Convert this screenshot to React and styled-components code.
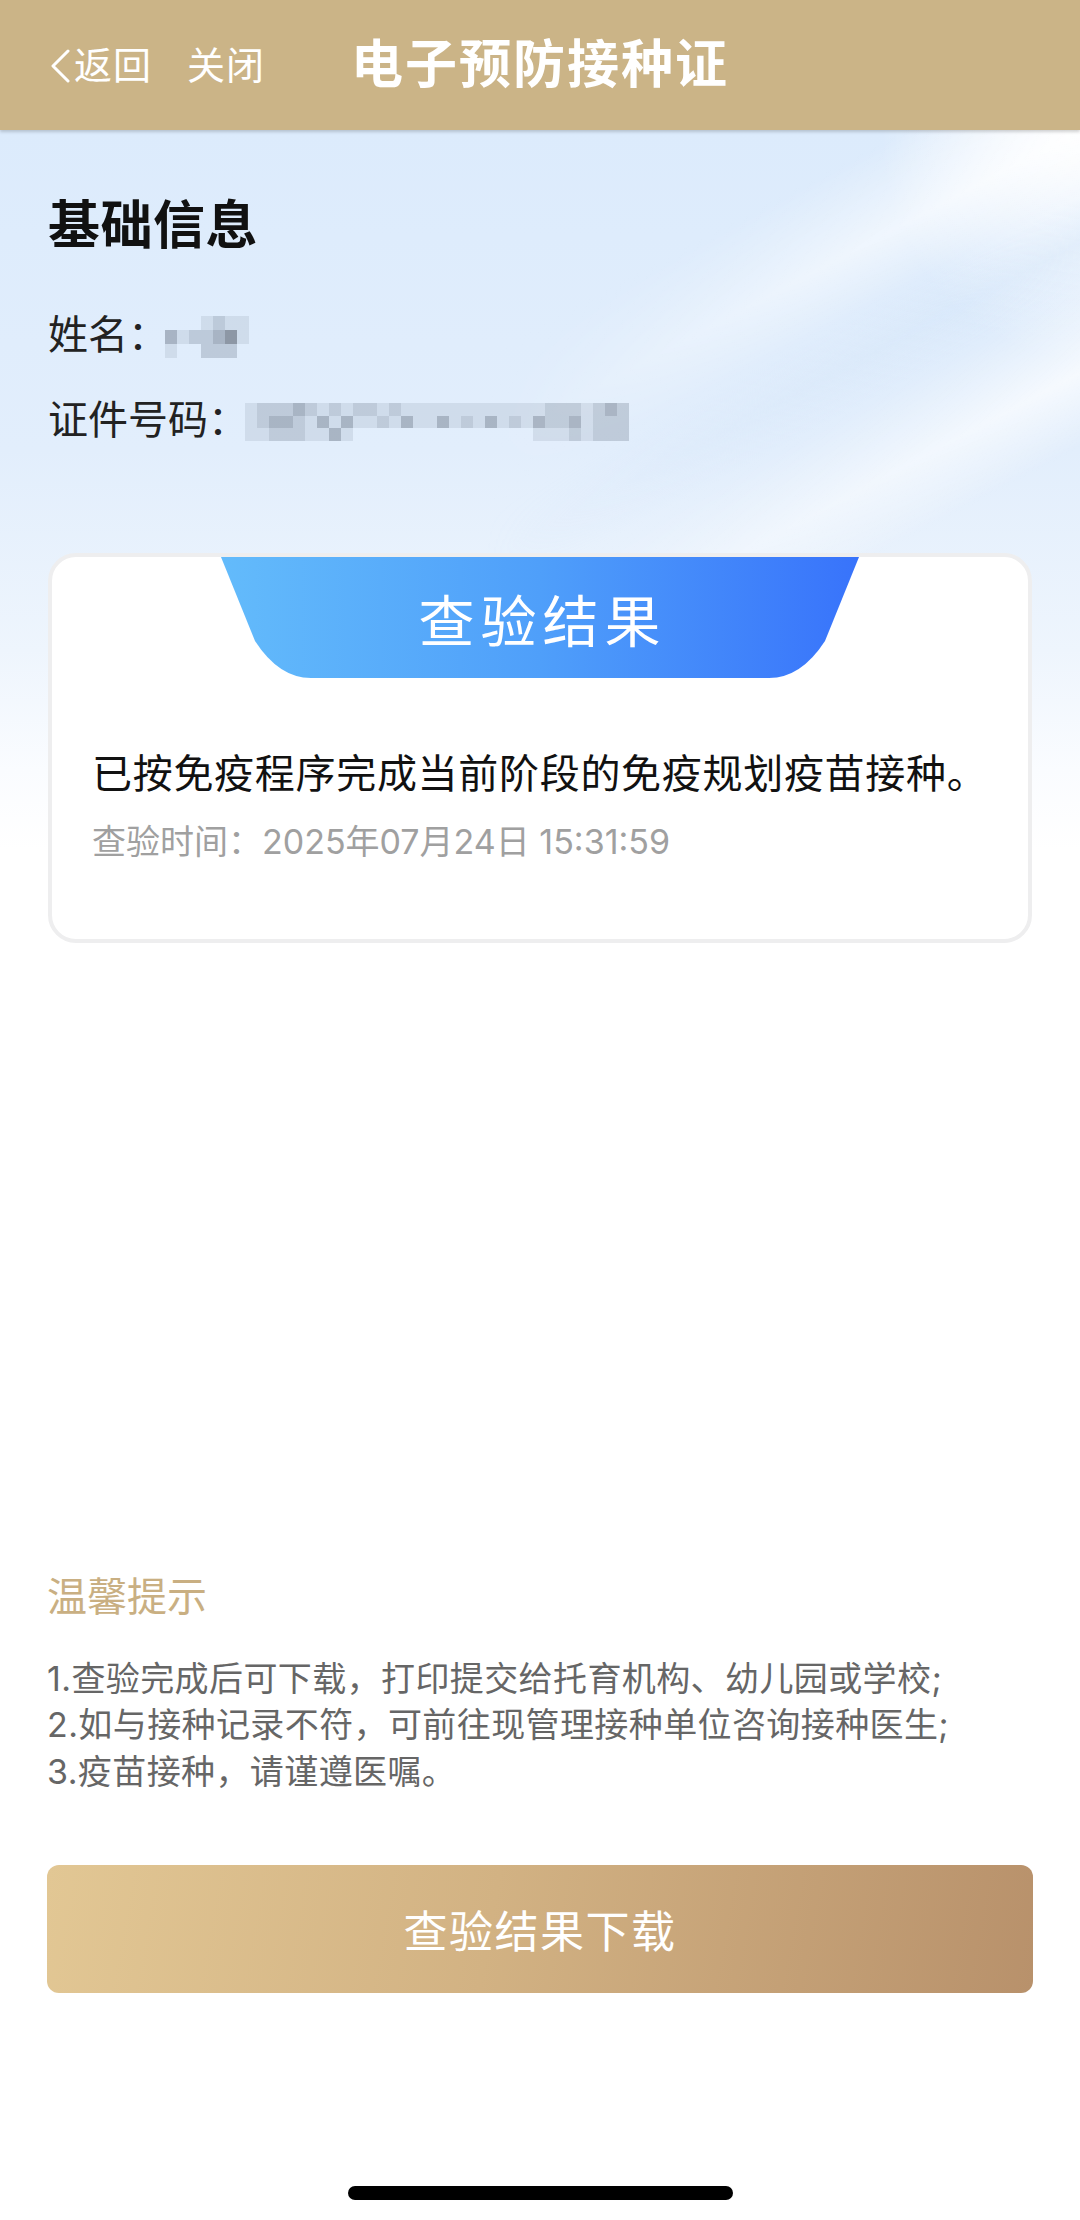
import React from "react";
import styled, { createGlobalStyle } from "styled-components";

const GlobalStyle = createGlobalStyle`
  html, body {
    margin: 0;
    padding: 0;
    background: #ffffff;
  }
  body {
    font-family: "Inter", "Noto Sans CJK SC", "Noto Sans", sans-serif;
    -webkit-font-smoothing: antialiased;
  }
  * {
    box-sizing: border-box;
  }
`;

const nameCells = [
  [0, 0, 0, 1, 2, 1, 1],
  [3, 1, 2, 2, 3, 4, 1],
  [1, 0, 0, 2, 2, 2, 0],
];

const idCells = [
  [1, 2, 2, 2, 3, 2, 1, 2, 1, 2, 2, 1, 2, 1, 1, 1, 1, 1, 1, 1, 1, 1, 1, 1, 1, 2, 2, 2, 1, 2, 3, 2],
  [1, 2, 3, 3, 2, 1, 3, 1, 3, 1, 1, 2, 1, 3, 1, 1, 3, 1, 2, 1, 3, 1, 2, 1, 3, 2, 2, 3, 1, 2, 2, 2],
  [1, 1, 2, 2, 2, 1, 1, 3, 1, 0, 0, 0, 0, 0, 0, 0, 0, 0, 0, 0, 0, 0, 0, 0, 1, 1, 1, 2, 1, 2, 2, 2],
];

const tips = [
  "1.查验完成后可下载，打印提交给托育机构、幼儿园或学校;",
  "2.如与接种记录不符，可前往现管理接种单位咨询接种医生;",
  "3.疫苗接种，请谨遵医嘱。",
];

const shades = [
  "transparent",
  "rgba(120, 132, 150, 0.16)",
  "rgba(110, 122, 140, 0.3)",
  "rgba(100, 110, 128, 0.45)",
  "rgba(90, 98, 112, 0.62)",
];

const App = () => {
  return (
    <Page>
      <GlobalStyle />
      <Header>
        <NavLinks>
          <NavLink>
            <svg width="22" height="34" viewBox="0 0 22 34">
              <polyline
                points="19,2 4,17 19,32"
                fill="none"
                stroke="#ffffff"
                strokeWidth="3"
                strokeLinecap="round"
                strokeLinejoin="round"
              />
            </svg>
            <span>返回</span>
          </NavLink>
          <NavLink>关闭</NavLink>
        </NavLinks>
        <Title>电子预防接种证</Title>
        <div />
      </Header>

      <Body>
        <Content>
          <SectionTitle>基础信息</SectionTitle>
          <InfoList>
            <InfoRow>
              <Label>姓名：</Label>
              <Mosaic $cols={7} $w={12} $h={14}>
                {nameCells.flat().map((lv, i) => (
                  <Cell key={i} $level={lv} />
                ))}
              </Mosaic>
            </InfoRow>
            <InfoRow>
              <Label>证件号码：</Label>
              <Mosaic $cols={32} $w={12} $h={12.5}>
                {idCells.flat().map((lv, i) => (
                  <Cell key={i} $level={lv} />
                ))}
              </Mosaic>
            </InfoRow>
          </InfoList>

          <Card>
            <CardTab>查验结果</CardTab>
            <ResultText>已按免疫程序完成当前阶段的免疫规划疫苗接种。</ResultText>
            <CheckTime>查验时间：2025年07月24日 15:31:59</CheckTime>
          </Card>
        </Content>

        <Tips>
          <TipsTitle>温馨提示</TipsTitle>
          <TipsList>
            {tips.map((t) => (
              <TipLine key={t}>{t}</TipLine>
            ))}
          </TipsList>
          <DownloadButton type="button">查验结果下载</DownloadButton>
        </Tips>

        <HomeBar />
      </Body>
    </Page>
  );
};

const Page = styled.div`
  width: 1080px;
  min-height: 100vh;
  display: flex;
  flex-direction: column;
  background: #ffffff;
`;

const Header = styled.header`
  height: 130px;
  flex-shrink: 0;
  display: grid;
  grid-template-columns: 1fr auto 1fr;
  align-items: center;
  padding: 0 49px;
  background: #cbb487;
  box-shadow: 0 2px 3px rgba(0, 0, 0, 0.18);
  position: relative;
  z-index: 2;
  color: #ffffff;
`;

const NavLinks = styled.div`
  display: flex;
  align-items: center;
  gap: 35px;
`;

const NavLink = styled.div`
  display: flex;
  align-items: center;
  gap: 3px;
  font-size: 38px;
  line-height: 1;
  font-weight: 400;
  letter-spacing: 1px;

  svg {
    display: block;
    margin-top: 2px;
  }
`;

const Title = styled.h1`
  margin: 0;
  font-size: 52px;
  font-weight: 700;
  line-height: 1;
  letter-spacing: 2px;
  color: #ffffff;
`;

const Body = styled.div`
  flex: 1;
  display: flex;
  flex-direction: column;
  position: relative;
  background:
    radial-gradient(ellipse 200px 230px at 100% 0%, rgba(255, 255, 255, 0.95), rgba(255, 255, 255, 0) 100%),
    linear-gradient(180deg, #dcebfc 0px, #e2eefc 320px, #eef5fd 520px, #fafcff 640px, #ffffff 720px);

  &::before {
    content: "";
    position: absolute;
    top: 0;
    right: 0;
    width: 700px;
    height: 560px;
    pointer-events: none;
    background: linear-gradient(
      152deg,
      rgba(255, 255, 255, 0) 30%,
      rgba(255, 255, 255, 0.75) 40%,
      rgba(255, 255, 255, 0) 47%,
      rgba(205, 225, 248, 0.35) 52%,
      rgba(255, 255, 255, 0) 57%,
      rgba(255, 255, 255, 0.7) 66%,
      rgba(255, 255, 255, 0) 74%
    );
    -webkit-mask-image: linear-gradient(to left, #000 0%, rgba(0, 0, 0, 0.6) 40%, transparent 85%);
    mask-image: linear-gradient(to left, #000 0%, rgba(0, 0, 0, 0.6) 40%, transparent 85%);
  }
`;

const Content = styled.main`
  position: relative;
  z-index: 1;
  padding: 68px 48px 0;
`;

const SectionTitle = styled.h2`
  margin: 0;
  font-size: 52px;
  line-height: 56px;
  font-weight: 700;
  color: #111111;
  letter-spacing: 0.5px;
`;

const InfoList = styled.div`
  margin-top: 51px;
  display: flex;
  flex-direction: column;
  gap: 25px;
`;

const InfoRow = styled.div`
  height: 60px;
  display: flex;
  align-items: center;
`;

const Label = styled.span`
  font-size: 40px;
  line-height: 60px;
  color: #222222;
`;

const Mosaic = styled.div`
  display: grid;
  grid-template-columns: repeat(${(p) => p.$cols}, ${(p) => p.$w}px);
  grid-auto-rows: ${(p) => p.$h}px;
  margin-top: 4px;
  margin-left: -3px;
  filter: blur(0.6px);
`;

const Cell = styled.div`
  background: ${(p) => shades[p.$level]};
`;

const Card = styled.section`
  margin-top: 103px;
  background: #ffffff;
  border: 4px solid #eeeeef;
  border-radius: 28px;
  padding: 0 24px 73px 40px;
`;

const CardTab = styled.div`
  width: 638px;
  height: 121px;
  margin: 0 auto;
  transform: translateX(-8px);
  display: flex;
  align-items: center;
  justify-content: center;
  padding-left: 5px;
  clip-path: path("M0 0 H638 L604 84 Q580 121 548 121 H90 Q58 121 34 84 Z");
  background: linear-gradient(90deg, #63bbfb 0%, #4f9ffa 50%, #3873fb 100%);
  color: #ffffff;
  font-size: 56px;
  letter-spacing: 6px;
  font-weight: 400;
`;

const ResultText = styled.p`
  margin: 68px 0 0;
  font-size: 40px;
  line-height: 56px;
  letter-spacing: 0.7px;
  white-space: nowrap;
  color: #111111;
`;

const CheckTime = styled.p`
  margin: 16px 0 0;
  font-size: 34px;
  line-height: 48px;
  color: #a0a0a0;
`;

const Tips = styled.footer`
  margin-top: auto;
  padding: 0 47px;
  position: relative;
  z-index: 1;
`;

const TipsTitle = styled.h3`
  margin: 0;
  font-size: 40px;
  line-height: 52px;
  font-weight: 400;
  color: #c9af82;
`;

const TipsList = styled.div`
  margin-top: 33px;
  display: flex;
  flex-direction: column;
`;

const TipLine = styled.p`
  margin: 0;
  font-size: 34px;
  line-height: 46.5px;
  letter-spacing: 0.4px;
  color: #666666;
`;

const DownloadButton = styled.button`
  margin-top: 70px;
  width: 100%;
  height: 128px;
  border: none;
  border-radius: 12px;
  background: linear-gradient(100deg, #e2c794 0%, #d2b283 45%, #b8916b 100%);
  color: #ffffff;
  font-family: inherit;
  font-size: 44px;
  letter-spacing: 1.5px;
  cursor: pointer;
`;

const HomeBar = styled.div`
  width: 385px;
  height: 14px;
  margin: 193px auto 20px;
  border-radius: 7px;
  background: #000000;
`;

export default App;
